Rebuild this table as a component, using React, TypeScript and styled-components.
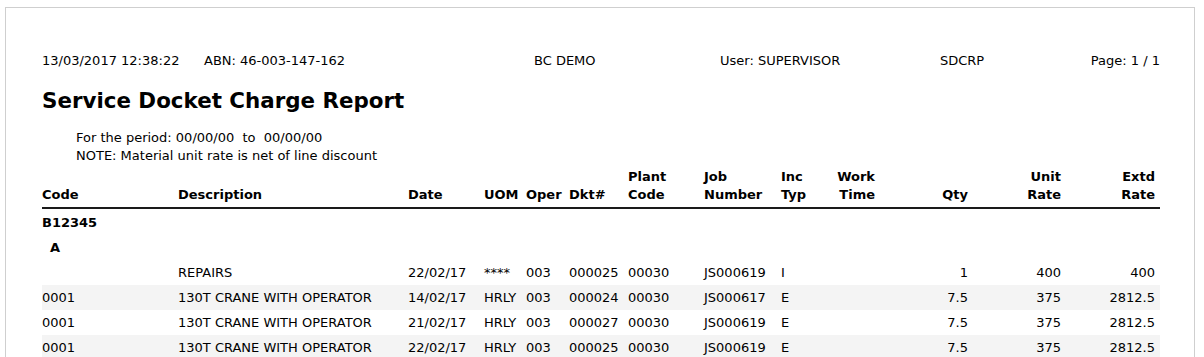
import React from "react";
import styled, { createGlobalStyle } from "styled-components";

const Global = createGlobalStyle`
  body {
    margin: 0;
    background: #fff;
    font-family: "DejaVu Sans", Verdana, sans-serif;
    color: #000;
  }
`;

const COLS = "136px 230px 76px 42px 43px 59px 76px 77px 55px 44px 93px 93px 94px";

const S = {
  Page: styled.div`
    margin: 7px 0 0 5px;
    width: 1190px;
    height: 360px;
    border: 1px solid #cfcfcf;
    border-bottom: none;
    padding: 45px 0 0 36px;
    box-sizing: border-box;
  `,
  InfoBar: styled.div`
    display: grid;
    grid-template-columns: 162px 330px 186px 220px 1fr auto;
    width: 1118px;
    font-size: 13px;
    line-height: 16px;
  `,
  Title: styled.h1`
    margin: 19px 0 0;
    font-size: 21.4px;
    line-height: 26px;
    font-weight: bold;
  `,
  Notes: styled.div`
    margin: 15px 0 0 34px;
    font-size: 13px;
    line-height: 18px;
    white-space: pre;
  `,
  Table: styled.div`
    width: 1118px;
    margin-top: 3px;
    font-size: 13px;
  `,
  HeadRow: styled.div`
    display: grid;
    grid-template-columns: ${COLS};
    align-items: end;
    padding-bottom: 3px;
    border-bottom: 2px solid #1a1a1a;
    font-weight: bold;
    line-height: 18px;
  `,
  Row: styled.div<{ $shaded?: boolean }>`
    display: grid;
    grid-template-columns: ${COLS};
    align-items: center;
    height: 25px;
    background: ${p => (p.$shaded ? "#f4f4f4" : "transparent")};
  `,
  Body: styled.div`
    padding-top: 1px;
  `,
  Cell: styled.div<{ $right?: boolean }>`
    text-align: ${p => (p.$right ? "right" : "left")};
    padding-right: ${p => (p.$right ? "5px" : "0")};
    white-space: nowrap;
  `,
  GroupRow: styled.div<{ $indent?: number }>`
    height: 25px;
    display: flex;
    align-items: center;
    padding-left: ${p => p.$indent ?? 0}px;
    font-weight: bold;
  `,
} as const;

const headers: { label: React.ReactNode; right?: boolean }[] = [
  { label: "Code" },
  { label: "Description" },
  { label: "Date" },
  { label: "UOM" },
  { label: "Oper" },
  { label: "Dkt#" },
  { label: <>Plant<br />Code</> },
  { label: <>Job<br />Number</> },
  { label: <>Inc<br />Typ</> },
  { label: <>Work<br />Time</>, right: true },
  { label: "Qty", right: true },
  { label: <>Unit<br />Rate</>, right: true },
  { label: <>Extd<br />Rate</>, right: true },
];

const RIGHT = [9, 10, 11, 12];

const rows = [
  ["", "REPAIRS", "22/02/17", "****", "003", "000025", "00030", "JS000619", "I", "", "1", "400", "400"],
  ["0001", "130T CRANE WITH OPERATOR", "14/02/17", "HRLY", "003", "000024", "00030", "JS000617", "E", "", "7.5", "375", "2812.5"],
  ["0001", "130T CRANE WITH OPERATOR", "21/02/17", "HRLY", "003", "000027", "00030", "JS000619", "E", "", "7.5", "375", "2812.5"],
  ["0001", "130T CRANE WITH OPERATOR", "22/02/17", "HRLY", "003", "000025", "00030", "JS000619", "E", "", "7.5", "375", "2812.5"],
];

const App: React.FC = () => {
  return <>
    <Global />
    <S.Page>
      <S.InfoBar>
        <span>13/03/2017 12:38:22</span>
        <span>ABN: 46-003-147-162</span>
        <span>BC DEMO</span>
        <span>User: SUPERVISOR</span>
        <span>SDCRP</span>
        <span>Page: 1 / 1</span>
      </S.InfoBar>
      <S.Title>Service Docket Charge Report</S.Title>
      <S.Notes>
        {"For the period: 00/00/00  to  00/00/00"}
        <br />
        NOTE: Material unit rate is net of line discount
      </S.Notes>
      <S.Table>
        <S.HeadRow>
          {headers.map((h, i) => (
            <S.Cell key={i} $right={h.right}>{h.label}</S.Cell>
          ))}
        </S.HeadRow>
        <S.Body>
          <S.GroupRow>B12345</S.GroupRow>
          <S.GroupRow $indent={8}>A</S.GroupRow>
          {rows.map((r, i) => (
            <S.Row key={i} $shaded={i % 2 === 1}>
              {r.map((v, j) => (
                <S.Cell key={j} $right={RIGHT.includes(j)}>{v}</S.Cell>
              ))}
            </S.Row>
          ))}
        </S.Body>
      </S.Table>
    </S.Page>
  </>;
};

export default App;
